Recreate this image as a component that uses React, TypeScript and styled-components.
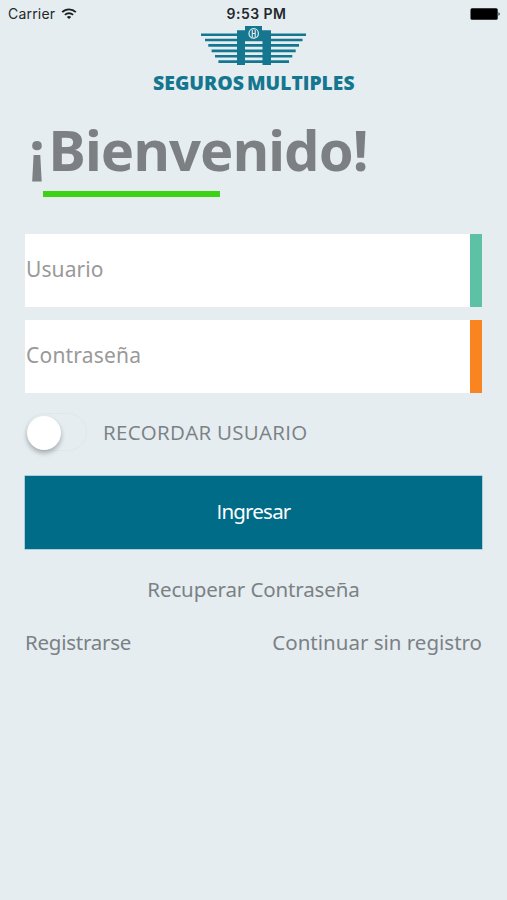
import React, { useState } from "react";
import styled, { createGlobalStyle } from "styled-components";

const GlobalStyle = createGlobalStyle`
  * { box-sizing: border-box; }
  body { margin: 0; background: #e5edf1; }
  button { border: 0; padding: 0; background: none; font: inherit; color: inherit; cursor: pointer; }
`;

const Screen = styled.main`
  width: 507px;
  height: 900px;
  overflow: hidden;
  background: #e5edf1;
  color: #7b8184;
  font-family: "Noto Sans", sans-serif;
  font-size: 20.5px;
`;

const StatusBar = styled.header`
  display: grid;
  grid-template-columns: 1fr auto 1fr;
  align-items: center;
  height: 26px;
  padding: 2px 7px 0 8px;
  font: 14px/24px Inter, sans-serif;
  color: #24282a;
`;

const Carrier = styled.div`
  display: flex;
  align-items: center;
  gap: 6px;
  letter-spacing: 0.2px;
`;

const Clock = styled.div`
  padding-left: 5px;
  font-weight: 600;
  letter-spacing: 0.45px;
`;

const BatteryIcon = styled.svg`
  justify-self: end;
`;

const Brand = styled.div`
  display: flex;
  justify-content: center;
  height: 72px;
`;

const Heading = styled.h1`
  margin: 11px 0 0 29px;
  font-size: 56px;
  line-height: 80px;
  font-weight: 700;
  letter-spacing: -0.85px;
  color: #7d8082;
`;

const OpeningMark = styled.span`
  letter-spacing: 3.5px;
`;

const Underline = styled.div`
  width: 177px;
  height: 6px;
  margin: 2px 0 0 43px;
  background: #3dd315;
`;

const Form = styled.form`
  display: flex;
  flex-direction: column;
  margin: 37px 25px 0;
`;

const Field = styled.label<{ $accent: string }>`
  height: 73px;
  margin-bottom: 13px;
  background: #fff;
  border-right: 12px solid ${(p) => p.$accent};
`;

const Input = styled.input<{ $spacing: number }>`
  display: block;
  width: 100%;
  height: 70px;
  padding: 0 1px;
  border: 0;
  outline: 0;
  background: transparent;
  font: 21px "Noto Sans", sans-serif;
  letter-spacing: ${(p) => p.$spacing}px;
  color: #7b8184;
  &::placeholder { color: #999; opacity: 1; }
`;

const Remember = styled.div`
  display: flex;
  align-items: center;
  gap: 16px;
  height: 36px;
  margin-top: 8px;
  line-height: 30px;
`;

const Switch = styled.button<{ $on: boolean }>`
  display: flex;
  justify-content: ${(p) => (p.$on ? "flex-end" : "flex-start")};
  width: 62px;
  height: 38px;
  padding: 2px 1px;
  border: 1px solid #dfe7ea;
  border-radius: 19px;
  background: ${(p) => (p.$on ? "#5dc1a5" : "transparent")};
`;

const Thumb = styled.span`
  width: 34px;
  height: 34px;
  border-radius: 50%;
  background: #fff;
  box-shadow: 0 3px 5px rgba(0, 0, 0, 0.28);
`;

const Label = styled.span<{ $spacing: number }>`
  letter-spacing: ${(p) => p.$spacing}px;
  white-space: nowrap;
`;

const CapsLabel = styled(Label)`
  font-family: "Open Sans", sans-serif;
`;

const PlainInitial = styled.span`
  font-family: "Open Sans", sans-serif;
`;

const Submit = styled.button`
  height: 73px;
  margin-top: 26px;
  padding-bottom: 3px;
  background: #006c87;
  box-shadow: 0 0 0 0.5px #72afbf;
  color: #fff;
`;

const Recover = styled.button`
  align-self: center;
  height: 30px;
  margin-top: 25px;
  line-height: 30px;
`;

const Links = styled.nav`
  display: flex;
  justify-content: space-between;
  margin-top: 23px;
  line-height: 30px;
`;

const STRIPES = [
  [201, 306, 34.7], [205, 302.5, 40], [208.3, 299, 45.4],
  [211.6, 295.7, 50.9], [215, 292.3, 56.2], [218.4, 289, 61.6],
];

function Logo() {
  return (
    <svg width="204" height="72" viewBox="152 26 204 72" role="img" aria-label="Seguros Multiples">
      <g stroke="#15768f" strokeWidth="2.6">
        {STRIPES.map(([left, right, y]) => (
          <path key={y} d={`M${left} ${y}H${right}`} />
        ))}
      </g>
      <path fill="#15768f" d="M237 30.3H245V26H262V30.3H271V65H262.5V41H245V65H237Z" />
      <circle cx="253.7" cy="33.4" r="4.7" fill="#15768f" stroke="#e5edf1" strokeWidth="1.2" />
      <path d="M252.3 30V37M255.2 30V37M252.3 33.5H255.2" stroke="#e5edf1" strokeWidth="1.1" fill="none" />
      <g fill="#15768f" fontFamily="Open Sans, sans-serif" fontWeight="800" fontSize="19.3">
        <text x="153" y="90" textLength="91" lengthAdjust="spacingAndGlyphs">SEGUROS</text>
        <text x="247" y="90" textLength="107.5" lengthAdjust="spacingAndGlyphs">MULTIPLES</text>
      </g>
    </svg>
  );
}

function WifiIcon() {
  return (
    <svg width="16" height="12" viewBox="0 0 16 12" fill="none" stroke="#1c2022" strokeWidth="1.9">
      <path d="M1.2 4.2C5 .4 11 .4 14.8 4.2M3.9 6.9c2.3-2.2 5.9-2.2 8.2 0" />
      <path d="M5.8 8.9c1.3-1.1 3.1-1.1 4.4 0L8 11.1Z" fill="#1c2022" stroke="none" />
    </svg>
  );
}

export default function App() {
  const [remember, setRemember] = useState(false);
  return (
    <>
      <GlobalStyle />
      <Screen>
        <StatusBar>
          <Carrier>Carrier <WifiIcon /></Carrier>
          <Clock>9:53 PM</Clock>
          <BatteryIcon width="30" height="12" viewBox="0 0 30 12">
            <rect x="0.5" y="0.3" width="27.2" height="11.4" rx="1.5" fill="#000" />
            <path d="M28.5 4.2c1.6.4 1.6 3.2 0 3.6Z" fill="#222" />
          </BatteryIcon>
        </StatusBar>
        <Brand><Logo /></Brand>
        <Heading><OpeningMark>¡</OpeningMark>Bienvenido!</Heading>
        <Underline />
        <Form onSubmit={(e) => e.preventDefault()}>
          <Field $accent="#5dc1a5">
            <Input $spacing={0.1} placeholder="Usuario" aria-label="Usuario" />
          </Field>
          <Field $accent="#f98420">
            <Input $spacing={0.2} type="password" placeholder="Contraseña" aria-label="Contraseña" />
          </Field>
          <Remember>
            <Switch
              type="button"
              role="switch"
              aria-checked={remember}
              aria-label="Recordar usuario"
              $on={remember}
              onClick={() => setRemember(!remember)}
            >
              <Thumb />
            </Switch>
            <CapsLabel $spacing={0.3}>RECORDAR USUARIO</CapsLabel>
          </Remember>
          <Submit type="submit">
            <Label $spacing={-0.8}><PlainInitial>I</PlainInitial>ngresar</Label>
          </Submit>
          <Recover type="button"><Label $spacing={-0.13}>Recuperar Contraseña</Label></Recover>
          <Links>
            <button type="button"><Label $spacing={-0.25}>Registrarse</Label></button>
            <button type="button"><Label $spacing={0}>Continuar sin registro</Label></button>
          </Links>
        </Form>
      </Screen>
    </>
  );
}
